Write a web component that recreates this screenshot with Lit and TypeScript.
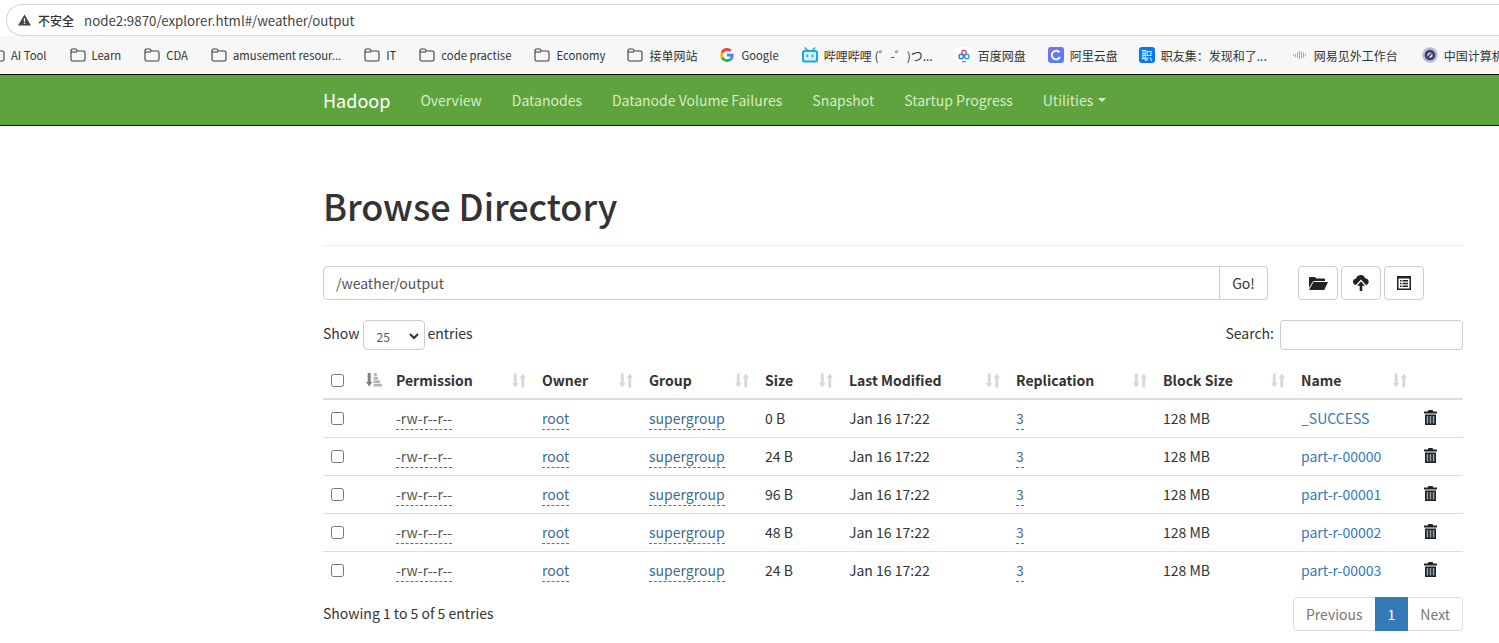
import { LitElement, html, css, svg } from "lit";
import { customElement } from "lit/decorators.js";

const sortBoth = html`<svg class="sort" viewBox="0 0 14 15" width="14" height="15"><path fill="#d8d8d8" d="M1.800 .5h2.900v9.500h1.800L3.250 14.500 0 10h1.800zM10.750 .5 14 5h-1.800v9.500H9.300V5H7.500z"/></svg>`;
const sortAsc = html`<svg class="sort" viewBox="0 0 16 14" width="16" height="14"><path fill="#808080" d="M1.700 0h3v9h1.700l-3.200 4.500L0 9h1.700z"/><path fill="#b4b4b4" d="M8 0h2.800v3H8zM7.500 3.700h4.500v2.800H7.500zM7.500 7.200h6.500v2.800H7.500zM7.500 10.700h8.500v2.800H7.500z"/></svg>`;
const trash = html`<svg class="trash" viewBox="0 0 13 15" width="13" height="15"><path fill="#222" d="M4.500 0h4l.8 1.500H13V3.500H0V1.500h3.700zM1 4.500h11V15H1z"/><path fill="#8fa8c0" d="M2.700 6h1.500v7.500H2.700zM5.750 6h1.500v7.500H5.750zM8.800 6h1.500v7.500H8.800z"/></svg>`;
const folder = html`<svg viewBox="0 0 19 14" width="19" height="14"><path fill="#222" d="M0 2q0-1 1-1h5l1.300 1.500H15q1 0 1 1V5H5.500Q4 5 3.300 6.500L0 12zM4.500 6H19l-3.800 8H0z"/></svg>`;
const upload = html`<svg viewBox="0 0 16 16" width="16" height="16"><path fill="#222" d="M8 0c2.200 0 3.700 1.500 4 3.300 2 .2 3.700 1.600 3.700 3.400 0 1.500-1 2.800-2.700 3.300L8 4.500 2.800 10C1 9.500 0 8.300 0 6.800c0-1.700 1.300-2.900 3-3.200C3.300 1.600 5.500 0 8 0z"/><path fill="#222" d="M8 6.500l4 4.300H9.300V16H6.700v-5.200H4z"/></svg>`;
const listIcon = html`<svg viewBox="0 0 14 14" width="14" height="14"><path fill="#222" d="M0 0h14v14H0zm1.500 2.500v10h11v-10zM3 4h1.500v1.500H3zm2.500 0H11v1.500H5.500zM3 6.800h1.500v1.500H3zm2.500 0H11v1.500H5.500zM3 9.600h1.500v1.500H3zm2.500 0H11v1.500H5.500z"/></svg>`;
const warn = html`<svg viewBox="0 0 14 12" width="13" height="12"><path fill="#444" fill-rule="evenodd" d="M7 0l7 12H0zM6.300 4v4h1.400V4zm0 5v1.400h1.400V9z"/></svg>`;
const fold = html`<svg class="bmi" viewBox="0 0 16 14" width="16" height="14"><path fill="none" stroke="#3c3c3c" stroke-width="1.100" d="M1 12V2.500q0-1.500 1.500-1.500h3Q7 1 7 3h6.500Q15 3 15 4.500V11.500Q15 13 13.500 13h-11Q1 13 1 11.500zM1 4h6"/></svg>`;

const icons: Record<string, unknown> = {
  g: svg`<path fill="#4285f4" d="M14.600 8.200c0-.5 0-1-.1-1.500H8v2.800h3.700c-.2.900-.6 1.600-1.400 2.100l2.200 1.800c1.300-1.200 2.100-3 2.100-5.200z"/><path fill="#34a853" d="M8 15c1.900 0 3.500-.6 4.500-1.700l-2.200-1.700c-.6.400-1.400.7-2.300.7-1.800 0-3.300-1.200-3.900-2.900L1.900 11.100C3 13.400 5.300 15 8 15z"/><path fill="#fbbc05" d="M4.100 9.400C3.800 8.600 3.800 7.400 4.100 6.600L1.900 4.900C1 6.700 1 9.300 1.900 11.100z"/><path fill="#ea4335" d="M8 3.800c1 0 1.900.3 2.600 1l2-2C11.300 1.700 9.800 1 8 1 5.300 1 3 2.600 1.900 4.900l2.200 1.700C4.700 5 6.200 3.800 8 3.800z"/>`,
  bili: svg`<path fill="#1fa8e0" d="M3.500 0l2.500 3h4l2.500-3 1.200 1L12 3h1.500Q16 3 16 5.500v7.500q0 2.500-2.500 2.500h-11Q0 15.500 0 13v-7.500Q0 3 2.500 3H4L2.300 1z"/><rect x="2" y="5" width="12" height="8.500" rx="1" fill="#d6f0fa"/><path fill="#1fa8e0" d="M4.500 7.500h1.800v2.500H4.500zM9.700 7.500h1.800v2.500H9.700z"/>`,
  baidu: svg`<rect width="16" height="16" rx="3" fill="#fff"/><circle cx="8" cy="5.500" r="2.200" fill="none" stroke="#e8505b" stroke-width="1.400"/><circle cx="5.200" cy="9.500" r="2.200" fill="none" stroke="#2a7be0" stroke-width="1.400"/><circle cx="10.800" cy="9.500" r="2.200" fill="none" stroke="#2aa0e0" stroke-width="1.400"/><path fill="#e8505b" d="M6 14h4v1.200H6z"/>`,
  ali: svg`<defs><linearGradient id="ag" x1="0" y1="0" x2="1" y2="1"><stop offset="0" stop-color="#7a6ff0"/><stop offset="1" stop-color="#4f83f5"/></linearGradient></defs><rect width="16" height="16" rx="3" fill="url(#ag)"/><path fill="none" stroke="#fff" stroke-width="1.900" d="M11.400 5.300A4.300 4.300 0 1 0 11.900 10"/>`,
  wy: svg`<path fill="none" stroke="#86b4d2" stroke-width="1" d="M1.500 7.500v1.500M3.500 6.500v3.500M5.500 5v6M7.500 4v8M9.500 4.500v7M11.500 5.500v5M13.500 7v2.500"/>`,
  ccf: svg`<circle cx="8" cy="8" r="7.700" fill="#b9bacf"/><circle cx="8" cy="8" r="5.300" fill="#3a3f74"/><circle cx="8" cy="8" r="2.600" fill="#dfe3ee"/><path stroke="#1f2450" stroke-width="1.200" d="M6 10l3.500-3.500"/>`,
};

const bookmarks: [string, string, boolean, number][] = [
  ["fold", "Learn", true, 0], ["fold", "CDA", true, 0], ["fold", "amusement resour...", true, 0], ["fold", "IT", true, 0],
  ["fold", "code practise", true, 0], ["fold", "Economy", true, 0], ["fold", "接单网站", false, -1], ["g", "Google", true, -1],
  ["bili", "哔哩哔哩 (゜-゜)つ...", false, 0], ["baidu", "百度网盘", false, 0], ["ali", "阿里云盘", false, -1], ["zhi", "职友集：发现和了...", false, -2],
  ["wy", "网易见外工作台", false, 2], ["ccf", "中国计算机", false, 1],
];

const navItems = ["Overview", "Datanodes", "Datanode Volume Failures", "Snapshot", "Startup Progress"];
const rows: [string, string][] = [
  ["0 B", "_SUCCESS"], ["24 B", "part-r-00000"], ["96 B", "part-r-00001"],
  ["48 B", "part-r-00002"], ["24 B", "part-r-00003"],
];
const columns: [string, string][] = [
  ["Permission", "c-perm"], ["Owner", "c-owner"], ["Group", "c-group"], ["Size", "c-size"],
  ["Last Modified", "c-mod"], ["Replication", "c-rep"], ["Block Size", "c-block"], ["Name", "c-name"],
];

@customElement("app-root")
export class AppRoot extends LitElement {
  static styles = css`
    :host { display: block; height: 643px; overflow: hidden; background: #fff; color: #333;
      font-family: "Noto Sans CJK SC", "Noto Sans", sans-serif; font-size: 14px; }
    .addr { height: 36px; background: #fff; display: flex; padding: 4px 0 0 6px; box-sizing: border-box; }
    .pill { flex: 1; height: 32px; border: 1px solid #d4d4d4; border-right: 0; border-radius: 16px 0 0 16px;
      display: flex; align-items: center; padding-left: 6px; box-sizing: border-box; }
    .warn { display: block; margin: 0 7px 0 5px; }
    .insecure { font-size: 12px; color: #333; margin-right: 10px; font-weight: 500; }
    .url { font-size: 13.300px; color: #444; }
    .bm { height: 38px; background: #f7f7f7; display: flex; align-items: center; white-space: nowrap;
      overflow: hidden; font-size: 12px; color: #333; box-sizing: border-box; }
    .bi { display: flex; align-items: center; gap: 6px; flex: none; margin-right: 23px; }
    .first { margin-left: -11px; }
    .lat { font-size: 11.300px; }
    .bmi { display: block; flex: none; }
    .zhi { width: 16px; height: 16px; border-radius: 3px; background: #0a78f5; color: #fff; font-size: 11px; line-height: 16px; text-align: center; flex: none; }
    .nav { height: 52px; box-sizing: border-box; background: #5fa33e; border-top: 1px solid #111; border-bottom: 1px solid #111;
      padding-left: 323px; display: flex; align-items: center; }
    .brand { font-size: 18px; color: #fff; margin-right: 30px; }
    .nav a { font-size: 14px; color: #d8ecc8; margin-right: 30px; display: flex; align-items: center; }
    .caret { width: 0; height: 0; border: 4px solid transparent; border-top-color: #d8ecc8; border-bottom: 0; margin-left: 5px; }
    main { margin: 0 36px 0 323px; }
    h1 { font-size: 36px; font-weight: 500; color: #333; line-height: 40px; margin: 0; padding: 59px 0 20px; border-bottom: 1px solid #eee; letter-spacing: -.05px; }
    .pathrow { display: flex; margin-top: 20px; height: 34px; }
    .path { width: 897px; box-sizing: border-box; border: 1px solid #ccc; border-radius: 4px 0 0 4px; padding-left: 12px;
      display: flex; align-items: center; color: #555; }
    .go { width: 48px; box-sizing: border-box; border: 1px solid #ccc; border-left: 0; border-radius: 0 4px 4px 0;
      display: flex; align-items: center; justify-content: center; color: #333; }
    .tools { display: flex; gap: 3px; margin-left: 30px; }
    .tool { width: 40px; height: 34px; box-sizing: border-box; border: 1px solid #ccc; border-radius: 4px; display: flex; align-items: center; justify-content: center; }
    .opts { display: flex; align-items: flex-start; justify-content: space-between; margin-top: 20px; height: 30px; line-height: 27px; }
    .show { display: flex; align-items: flex-start; }
    .select { width: 62px; height: 30px; box-sizing: border-box; border: 1px solid #ccc; border-radius: 4px; margin: 0 3px 0 3px;
      display: flex; align-items: center; justify-content: space-between; padding: 2px 5px 0 13px; font-size: 12px; color: #555; }
    .search { display: flex; align-items: flex-start; gap: 6px; }
    .sbox { width: 183px; height: 30px; box-sizing: border-box; border: 1px solid #ccc; border-radius: 4px; }
    table { border-collapse: collapse; table-layout: fixed; width: 1140px; margin-top: 12px; }
    th { height: 37px; padding: 0; text-align: left; font-weight: 700; border-bottom: 2px solid #ddd; box-sizing: border-box; vertical-align: middle; }
    td { height: 38px; padding: 0; border-bottom: 1px solid #ddd; box-sizing: border-box; vertical-align: middle; }
    tr:last-child td { border-bottom: 0; }
    .thc { display: flex; align-items: center; justify-content: space-between; padding-right: 16px; }
    .sort { display: block; flex: none; }
    .cb { display: block; width: 13px; height: 13px; box-sizing: border-box; border: 1px solid #767676; border-radius: 2.500px; margin-left: 8px; }
    .c-check { width: 43px; } .c-sort { width: 30px; } .c-perm { width: 146px; } .c-owner { width: 107px; }
    .c-group { width: 116px; } .c-size { width: 84px; } .c-mod { width: 167px; } .c-rep { width: 147px; }
    .c-block { width: 138px; } .c-name { width: 122px; } .c-del { width: 40px; }
    .dash { color: #3f6a8f; border-bottom: 1px dashed #0a8fd6; padding-bottom: 1px; }
    .perm { color: #555; }
    .link { color: #337ab7; }
    .trash { display: block; margin-left: 1px; position: relative; top: -1px; }
    .foot { display: flex; justify-content: space-between; align-items: flex-start; margin-top: 8px; }
    .info { padding-top: 6px; line-height: 20px; }
    .pager { display: flex; height: 34px; box-sizing: border-box; border: 1px solid #ddd; border-radius: 4px; color: #777; line-height: 32px; }
    .pager span { padding: 0 12px; }
    .pager .on { background: #337ab7; color: #fff; margin: -1px 0; height: 34px; line-height: 34px; padding: 0 13px; }
  `;

  private bmIcon(k: string) {
    if (k === "fold") return fold;
    if (k === "zhi") return html`<span class="zhi">职</span>`;
    return html`<svg class="bmi" viewBox="0 0 16 16" width="16" height="16">${icons[k]}</svg>`;
  }

  render() {
    return html`
      <div class="addr"><div class="pill"><span class="warn">${warn}</span><span class="insecure">不安全</span><span class="url">node2:9870/explorer.html#/weather/output</span></div></div>
      <div class="bm">
        <div class="bi first">${fold}<span class="lat">AI Tool</span></div>
        ${bookmarks.map(([k, t, lat, nudge]) => html`<div class="bi" style="margin-left:${nudge}px">${this.bmIcon(k)}<span class=${lat ? "lat" : ""}>${t}</span></div>`)}
      </div>
      <nav class="nav">
        <span class="brand">Hadoop</span>
        ${navItems.map((n) => html`<a>${n}</a>`)}
        <a>Utilities<span class="caret"></span></a>
      </nav>
      <main>
        <h1>Browse Directory</h1>
        <div class="pathrow">
          <div class="path">/weather/output</div>
          <div class="go">Go!</div>
          <div class="tools">
            <div class="tool">${folder}</div><div class="tool">${upload}</div><div class="tool">${listIcon}</div>
          </div>
        </div>
        <div class="opts">
          <div class="show">Show<div class="select"><span>25</span><svg width="10" height="7" viewBox="0 0 10 7"><path fill="none" stroke="#333" stroke-width="2" d="M1 1l4 4 4-4"/></svg></div>entries</div>
          <div class="search">Search:<div class="sbox"></div></div>
        </div>
        <table>
          <thead><tr>
            <th class="c-check"><span class="cb"></span></th>
            <th class="c-sort">${sortAsc}</th>
            ${columns.map(([t, c]) => html`<th class=${c}><div class="thc"><span>${t}</span>${sortBoth}</div></th>`)}
            <th class="c-del"></th>
          </tr></thead>
          <tbody>
            ${rows.map(([size, name]) => html`<tr>
              <td><span class="cb"></span></td><td></td>
              <td><span class="dash perm">-rw-r--r--</span></td>
              <td><span class="dash">root</span></td>
              <td><span class="dash">supergroup</span></td>
              <td>${size}</td>
              <td>Jan 16 17:22</td>
              <td><span class="dash">3</span></td>
              <td>128 MB</td>
              <td class="link">${name}</td>
              <td>${trash}</td>
            </tr>`)}
          </tbody>
        </table>
        <div class="foot">
          <div class="info">Showing 1 to 5 of 5 entries</div>
          <div class="pager"><span>Previous</span><span class="on">1</span><span>Next</span></div>
        </div>
      </main>
    `;
  }
}
